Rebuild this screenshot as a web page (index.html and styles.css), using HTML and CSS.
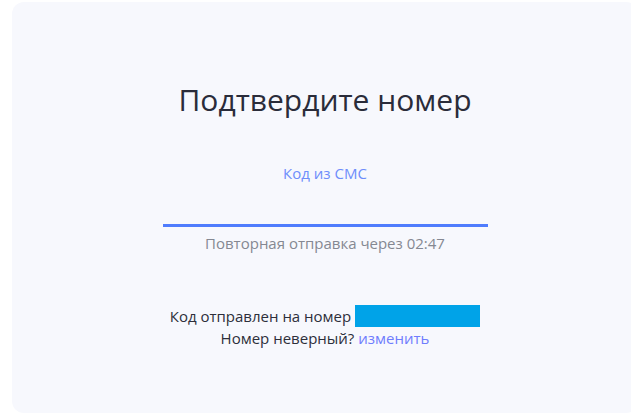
FILE: index.html
```html
<!DOCTYPE html>
<html lang="ru">
<head>
<meta charset="utf-8">
<title>Подтвердите номер</title>
<link rel="stylesheet" href="styles.css">
</head>
<body>
<div class="card">
  <h1 class="title">Подтвердите номер</h1>
  <div class="field">
    <label class="field-label">Код из СМС</label>
    <div class="field-line"></div>
  </div>
  <p class="timer">Повторная отправка через 02:47</p>
  <div class="info">
    <p class="sent">Код отправлен на номер <span class="phone"></span></p>
    <p class="wrong">Номер неверный? <a class="change" href="#">изменить</a></p>
  </div>
</div>
</body>
</html>
```
FILE: styles.css
```css
html, body {
  margin: 0;
  padding: 0;
  background: #ffffff;
  overflow: hidden;
}
body {
  padding: 2px 0 0 12px;
  font-family: "Open Sans", "Noto Sans", sans-serif;
}
.card {
  width: 626px;
  height: 411px;
  box-sizing: border-box;
  background: #f7f8fd;
  border-radius: 12px;
  display: flex;
  flex-direction: column;
  align-items: center;
  padding-top: 78px;
}
.title {
  margin: 0;
  font-size: 30px;
  font-weight: 400;
  line-height: 40px;
  color: #2a2c3a;
}
.field {
  margin-top: 43px;
  width: 325px;
  display: flex;
  flex-direction: column;
  align-items: center;
}
.field-label {
  font-size: 15px;
  line-height: 20px;
  color: #6e8dfb;
}
.field-line {
  margin-top: 41px;
  width: 100%;
  height: 3px;
  background: #4f7cfd;
}
.timer {
  margin: 6px 0 0;
  font-size: 15px;
  line-height: 20px;
  color: #858892;
}
.info {
  margin-top: 52px;
  display: flex;
  flex-direction: column;
  align-items: center;
}
.sent, .wrong {
  margin: 0;
  font-size: 15px;
  line-height: 22px;
  color: #2d2f3a;
  display: flex;
  align-items: center;
  gap: 4px;
}
.wrong {
  gap: 0;
  white-space: pre;
}
.phone {
  display: inline-block;
  width: 125px;
  height: 22px;
  background: #00a3e8;
}
.change {
  color: #6f7dfd;
  text-decoration: none;
}
```
